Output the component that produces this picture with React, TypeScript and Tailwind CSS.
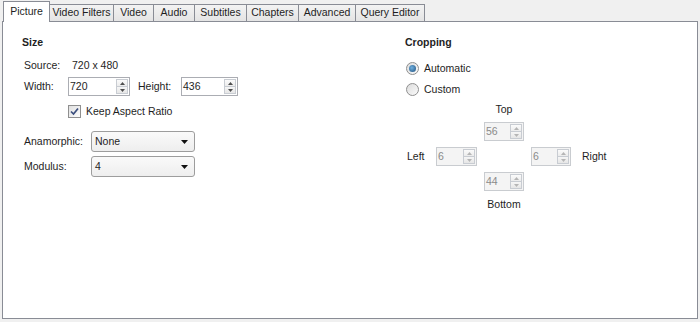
import React from 'react';

type SpinProps = {
  value: string;
  className: string;
  disabled?: boolean;
};

const Arrow = ({ up, disabled }: { up?: boolean; disabled?: boolean }) => (
  <svg width="5" height="3" viewBox="0 0 5 3">
    <path d={up ? 'M0 3 L2.5 0 L5 3 Z' : 'M0 0 L5 0 L2.5 3 Z'} fill={disabled ? '#b5b5b5' : '#4d4d4d'} />
  </svg>
);

const Spin: React.FC<SpinProps> = ({ value, className, disabled }) => {
  return (
    <div
      className={`flex h-[19px] border ${className} ${
        disabled ? 'border-[#c9ccd0] bg-[#f4f4f4] text-[#8a8a8a]' : 'border-[#abadb3] bg-white text-[#1e1e1e]'
      }`}
    >
      <span className="flex-1 pl-[1px] leading-[17px]">{value}</span>
      <div className="flex flex-col w-[12px] my-[1px] mr-[1px]">
        <div className="flex-1 flex items-center justify-center border border-[#c8ccd2] bg-linear-to-b from-[#fbfbfb] to-[#ececec]">
          <Arrow up disabled={disabled} />
        </div>
        <div className="flex-1 flex items-center justify-center border border-t-0 border-[#c8ccd2] bg-linear-to-b from-[#f6f6f6] to-[#e6e6e6]">
          <Arrow disabled={disabled} />
        </div>
      </div>
    </div>
  );
};

const Select = ({ value }: { value: string }) => (
  <div className="flex items-center w-[104px] h-[21px] rounded-[3px] border border-[#9d9d9d] bg-linear-to-b from-[#fafafa] to-[#eeeeee] pl-[3px] pr-[6px]">
    <span className="flex-1">{value}</span>
    <svg width="7" height="4" viewBox="0 0 7 4">
      <path d="M0 0 L7 0 L3.5 4 Z" fill="#111" />
    </svg>
  </div>
);

const Radio = ({ checked }: { checked?: boolean }) => (
  <div className="w-[13px] h-[13px] rounded-full border border-[#8f8f8f] bg-linear-to-br from-[#dcdcdc] to-[#fbfbfb] flex items-center justify-center">
    {checked && (
      <div className="w-[7px] h-[7px] rounded-full bg-[radial-gradient(circle_at_40%_40%,#6fb0e0,#1f4f7c)]" />
    )}
  </div>
);

const Checkbox = () => (
  <div className="w-[13px] h-[13px] border border-[#8f8f8f] bg-linear-to-br from-[#e0e0e0] to-[#fdfdfd] flex items-center justify-center">
    <svg width="9" height="9" viewBox="0 0 9 9">
      <path d="M1 4.5 L3.5 7 L8 1.5" stroke="#3c4f7e" strokeWidth="1.7" fill="none" />
    </svg>
  </div>
);

const tabs = [
  { label: 'Video Filters', w: 'w-[64px]' },
  { label: 'Video', w: 'w-[40px]' },
  { label: 'Audio', w: 'w-[41px]' },
  { label: 'Subtitles', w: 'w-[52px]' },
  { label: 'Chapters', w: 'w-[52px]' },
  { label: 'Advanced', w: 'w-[57px]' },
  { label: 'Query Editor', w: 'w-[69px]' },
];

export default function App() {
  return (
    <div className="w-[700px] h-[322px] bg-[#f0f0f0] text-[10.5px] text-[#1e1e1e] font-['Liberation_Sans',Arial,sans-serif] overflow-hidden">
      {/* tabs */}
      <div className="flex items-end h-[22px] pl-[3px]">
        <div className="relative z-10 w-[47px] h-[21px] border border-b-0 border-[#898c95] bg-white flex items-center justify-center pb-[1px]">
          Picture
        </div>
        {tabs.map((t) => (
          <div
            key={t.label}
            className={`${t.w} h-[17px] mb-[1px] border-t border-r border-[#898c95] bg-linear-to-b from-[#f3f3f3] to-[#e4e4e4] flex items-center justify-center`}
          >
            {t.label}
          </div>
        ))}
      </div>

      {/* panel */}
      <div className="-mt-px ml-[2px] w-[696px] h-[298px] border border-[#898c95] bg-white flex pl-[19px] pt-[14px]">
        {/* size column */}
        <div className="w-[383px] flex flex-col">
          <div className="h-[13px] leading-[13px] font-bold">Size</div>
          <div className="mt-[10px] h-[13px] leading-[13px] flex pl-[2px]">
            <span className="w-[48px]">Source:</span>
            <span>720 x 480</span>
          </div>
          <div className="mt-[5px] flex items-center pl-[2px]">
            <span className="w-[44px]">Width:</span>
            <Spin value="720" className="w-[62px]" />
            <span className="ml-[8px] w-[43px]">Height:</span>
            <Spin value="436" className="w-[57px]" />
          </div>
          <div className="mt-[9px] ml-[46px] flex items-center gap-[5px] h-[13px]">
            <Checkbox />
            <span>Keep Aspect Ratio</span>
          </div>
          <div className="mt-[13px] flex items-center pl-[2px]">
            <span className="w-[67px]">Anamorphic:</span>
            <Select value="None" />
          </div>
          <div className="mt-[4px] flex items-center pl-[2px]">
            <span className="w-[67px]">Modulus:</span>
            <Select value="4" />
          </div>
        </div>

        {/* cropping column */}
        <div className="flex-1 flex flex-col">
          <div className="h-[13px] leading-[13px] font-bold">Cropping</div>
          <div className="mt-[13px] ml-[1px] flex items-center gap-[5px] h-[13px]">
            <Radio checked />
            <span>Automatic</span>
          </div>
          <div className="mt-[8px] ml-[1px] flex items-center gap-[5px] h-[13px]">
            <Radio />
            <span>Custom</span>
          </div>
          <div className="mt-[7px] ml-[79px] w-[40px] h-[13px] leading-[13px] text-center">Top</div>
          <div className="mt-[6px] ml-[79px]">
            <Spin value="56" className="w-[40px]" disabled />
          </div>
          <div className="mt-[6px] flex items-center">
            <span className="ml-[2px] w-[29px]">Left</span>
            <Spin value="6" className="w-[41px]" disabled />
            <div className="ml-[54px]">
              <Spin value="6" className="w-[40px]" disabled />
            </div>
            <span className="ml-[11px]">Right</span>
          </div>
          <div className="mt-[6px] ml-[79px]">
            <Spin value="44" className="w-[40px]" disabled />
          </div>
          <div className="mt-[7px] ml-[79px] w-[40px] h-[13px] leading-[13px] text-center">Bottom</div>
        </div>
      </div>
    </div>
  );
}
